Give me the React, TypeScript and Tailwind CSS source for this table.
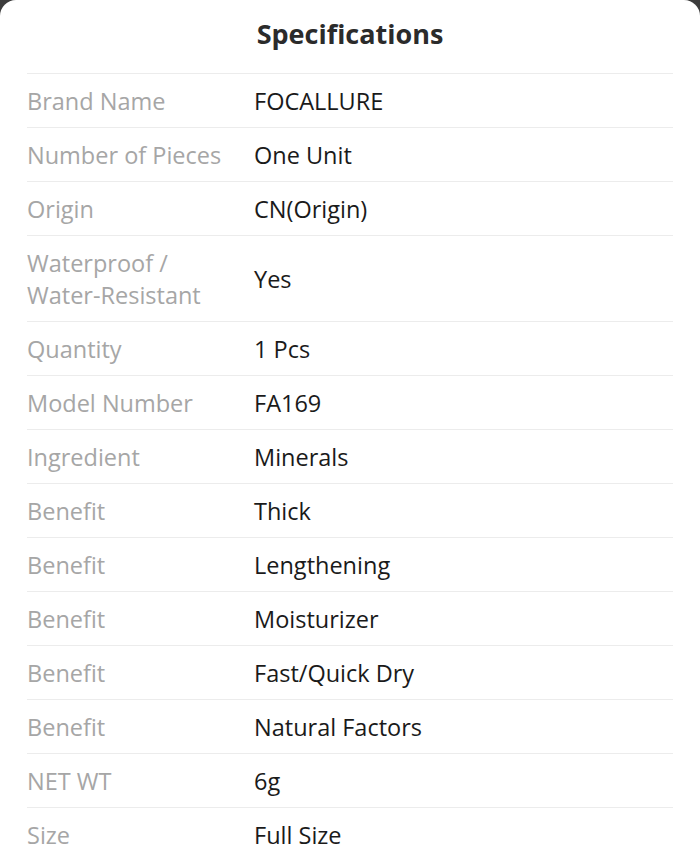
const specs: { label: string; value: string }[] = [
  { label: "Brand Name", value: "FOCALLURE" },
  { label: "Number of Pieces", value: "One Unit" },
  { label: "Origin", value: "CN(Origin)" },
  { label: "Waterproof / Water-Resistant", value: "Yes" },
  { label: "Quantity", value: "1 Pcs" },
  { label: "Model Number", value: "FA169" },
  { label: "Ingredient", value: "Minerals" },
  { label: "Benefit", value: "Thick" },
  { label: "Benefit", value: "Lengthening" },
  { label: "Benefit", value: "Moisturizer" },
  { label: "Benefit", value: "Fast/Quick Dry" },
  { label: "Benefit", value: "Natural Factors" },
  { label: "NET WT", value: "6g" },
  { label: "Size", value: "Full Size" },
];

export default function App() {
  return (
    <div className="w-[700px] h-[854px] overflow-hidden bg-[#3c3c3c] font-['Open_Sans',sans-serif]">
      <div className="h-full bg-white rounded-t-[16px]">
        <h2 className="h-[73px] pt-[14px] text-center text-[27px] font-bold leading-[40px] text-[#2b2b2b]">
          Specifications
        </h2>
        <div className="mx-[27px] border-t border-[#ececec]">
          {specs.map((s, i) => (
            <div key={i} className="flex items-center border-b border-[#ececec] py-[10.5px]">
              <div className="w-[227px] shrink-0 pr-4 text-[23.5px] leading-[32px] text-[#a6a6a6]">
                {s.label === "Waterproof / Water-Resistant" ? (
                  <>
                    Waterproof /
                    <br />
                    Water-Resistant
                  </>
                ) : (
                  s.label
                )}
              </div>
              <div className="text-[23.5px] leading-[32px] text-[#1a1a1a]">{s.value}</div>
            </div>
          ))}
        </div>
      </div>
    </div>
  );
}
